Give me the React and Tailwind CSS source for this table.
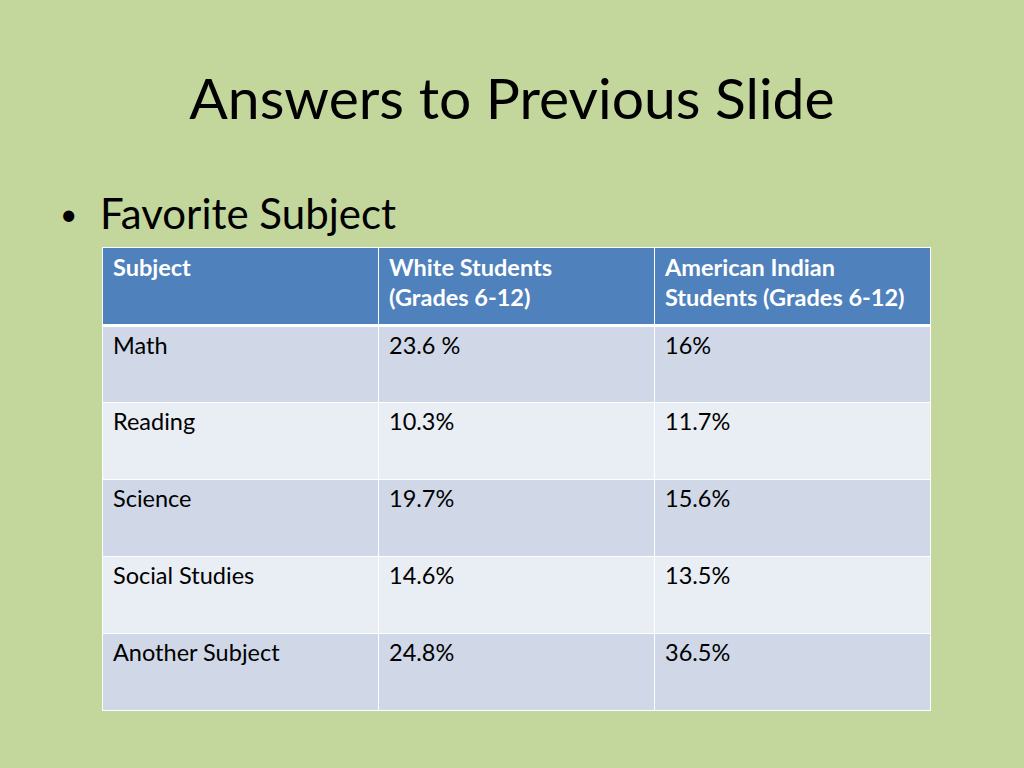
const rows = [
  ['Math', '23.6 %', '16%'],
  ['Reading', '10.3%', '11.7%'],
  ['Science', '19.7%', '15.6%'],
  ['Social Studies', '14.6%', '13.5%'],
  ['Another Subject', '24.8%', '36.5%'],
];

export default function App() {
  return (
    <div
      className="w-[1024px] h-[768px] bg-[#c3d69b] flex flex-col text-black"
      style={{ fontFamily: 'Lato, "Open Sans", sans-serif' }}
    >
      <h1 className="h-[191px] pt-[62px] text-center text-[57px] leading-[70px] font-normal text-black">
        Answers to Previous Slide
      </h1>

      <div className="flex items-center pl-[60px] h-[44px] mb-[12px]">
        <span className="w-[40px] text-[30px] leading-none">•</span>
        <span className="text-[42px] leading-none">Favorite Subject</span>
      </div>

      <table className="ml-[102px] w-[829px] table-fixed border-collapse text-[23.5px] leading-[30px]">
        <thead>
          <tr className="bg-[#4f81bd] text-white font-bold h-[78px]">
            <th className="w-1/3 border border-white border-b-[3px] px-[10px] pt-[4px] align-top text-left font-bold">
              Subject
            </th>
            <th className="w-1/3 border border-white border-b-[3px] px-[10px] pt-[4px] align-top text-left font-bold">
              White Students
              <br />
              (Grades 6-12)
            </th>
            <th className="w-1/3 border border-white border-b-[3px] px-[10px] pt-[4px] align-top text-left font-bold">
              American Indian
              <br />
              Students (Grades 6-12)
            </th>
          </tr>
        </thead>
        <tbody>
          {rows.map((r, i) => (
            <tr key={r[0]} className={i % 2 === 0 ? 'bg-[#d0d8e8] h-[77px]' : 'bg-[#e9edf4] h-[77px]'}>
              {r.map((c, j) => (
                <td key={j} className="border border-white px-[10px] pt-[3px] align-top">
                  {c}
                </td>
              ))}
            </tr>
          ))}
        </tbody>
      </table>
    </div>
  );
}
